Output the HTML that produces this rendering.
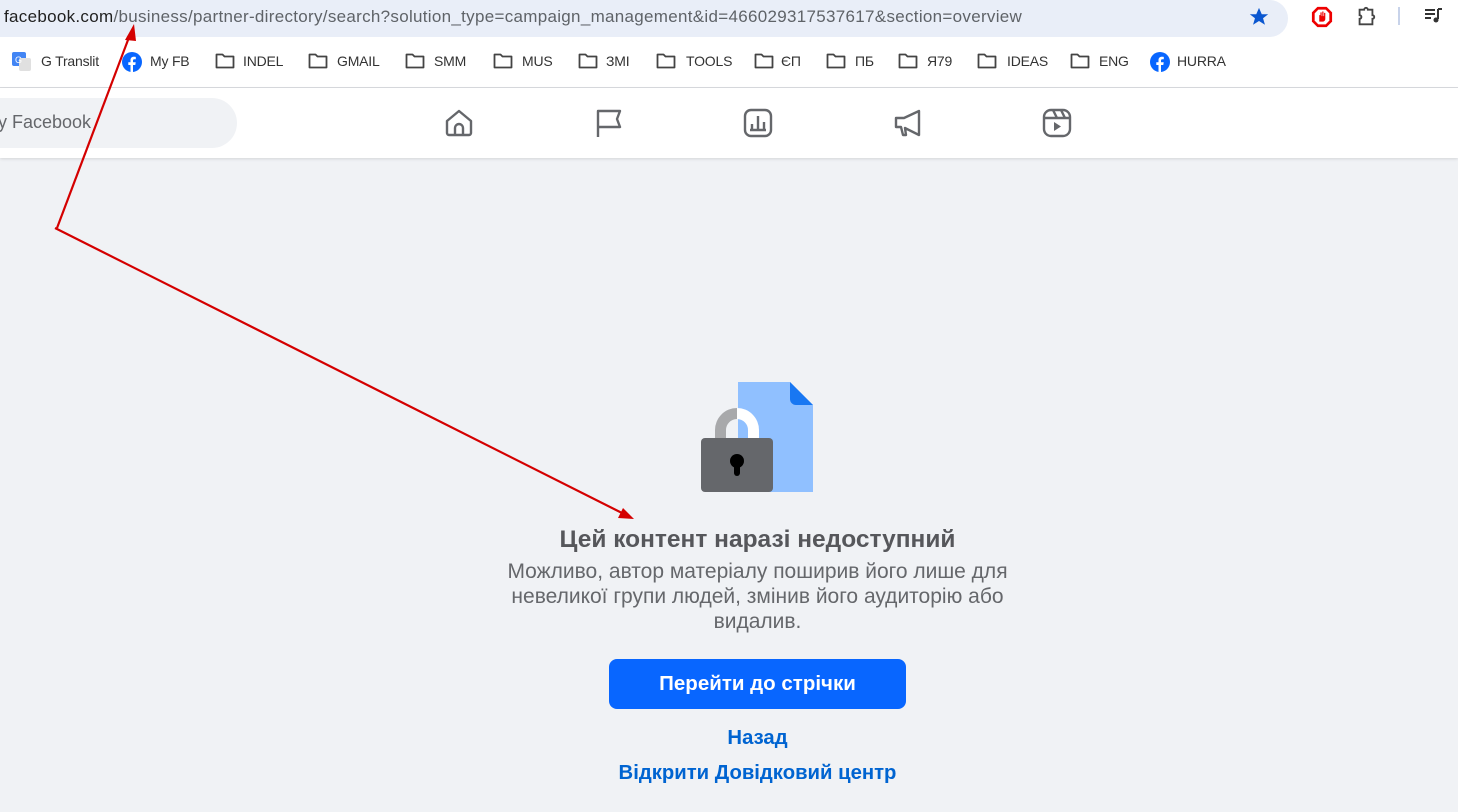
<!DOCTYPE html>
<html><head><meta charset="utf-8"><style>
*{margin:0;padding:0;box-sizing:border-box}
body{width:1458px;height:812px;overflow:hidden;background:#f0f2f5;font-family:"Liberation Sans","DejaVu Sans",sans-serif;position:relative}
.abs{position:absolute}
#top{left:0;top:0;width:1458px;height:88px;background:#fff;border-bottom:1px solid #dadce0}
#url{left:-20px;top:0;width:1308px;height:37px;background:#e9eef8;border-radius:0 19px 19px 0}
#urltext{left:4px;top:7px;font-size:17px;color:#5f6368;white-space:nowrap;letter-spacing:0.3px}
#urltext b{font-weight:normal;color:#1f1f1f}
.bm{position:absolute;top:53px;font-size:14px;color:#333;white-space:nowrap;letter-spacing:-0.2px}
.fold{position:absolute;top:53px;width:20px;height:16px}
#fbbar{left:0;top:88px;width:1458px;height:70px;background:#fff;box-shadow:0 1px 3px rgba(0,0,0,.12)}
#search{left:-40px;top:98px;width:277px;height:50px;background:#f0f2f5;border-radius:25px}
#stext{left:-2px;top:112px;font-size:18px;color:#65676b}
.c{position:absolute;left:0;width:1515px;text-align:center}
</style></head><body>
<div id="top" class="abs"></div>
<div id="url" class="abs"></div>
<div id="urltext" class="abs"><b>facebook.com</b>/business/partner-directory/search?solution_type=campaign_management&amp;id=466029317537617&amp;section=overview</div>
<svg class="abs" style="left:1248px;top:6px" width="22" height="22" viewBox="0 0 24 24"><path d="M12 2l3 7h7l-5.6 4.3 2.1 7.2L12 16.3 5.5 20.5l2.1-7.2L2 9h7z" fill="#0b57d0"/></svg>
<svg class="abs" style="left:1311px;top:6px" width="22" height="22" viewBox="0 0 24 24"><polygon points="7,1 17,1 23,7 23,17 17,23 7,23 1,17 1,7" fill="#e00"/><polygon points="8,4 16,4 20,8 20,16 16,20 8,20 4,16 4,8" fill="#fff"/><path d="M9 17v-7h1.3V7h1.3v4h.7V6h1.3v5h.7V7.5h1.3V14c0 2-1.5 3-3 3z" fill="#e00"/></svg>
<svg class="abs" style="left:1355px;top:6px" width="22" height="22" viewBox="0 0 24 24"><path d="M5 4h5a2 2 0 014 0h5v6a2 2 0 010 4v6H5v-6a2 2 0 000-4z" fill="none" stroke="#444" stroke-width="2"/></svg>
<div class="abs" style="left:1398px;top:7px;width:2px;height:18px;background:#c8d3ea"></div>
<svg class="abs" style="left:1424px;top:7px" width="20" height="18" viewBox="0 0 20 18"><path d="M1 3h10M1 7h10M1 11h6M14 2v10" stroke="#333" stroke-width="2"/><circle cx="12" cy="13" r="2.5" fill="#333"/><path d="M14 2h4" stroke="#333" stroke-width="2"/></svg>

<svg class="abs" style="left:12px;top:52px" width="20" height="20" viewBox="0 0 20 20"><rect x="0" y="0" width="14" height="14" rx="2" fill="#4285f4"/><rect x="7" y="6" width="12" height="13" rx="2" fill="#e0e0e0"/><text x="3" y="11" font-size="9" fill="#fff" font-family="Liberation Sans">G</text></svg>
<div class="bm" style="left:41px">G Translit</div>
<svg class="abs" style="left:122px;top:52px" width="20" height="20" viewBox="0 0 20 20"><circle cx="10" cy="10" r="10" fill="#0866ff"/><path d="M11 20v-7h2.3l.4-2.7H11V8.6c0-.8.3-1.3 1.4-1.3h1.4V4.9c-.3 0-1.1-.1-2-.1-2 0-3.3 1.2-3.3 3.4v2.1H6.3V13h2.2v7z" fill="#fff"/></svg>
<div class="bm" style="left:150px">My FB</div>
<svg class="abs" style="left:1150px;top:52px" width="20" height="20" viewBox="0 0 20 20"><circle cx="10" cy="10" r="10" fill="#0866ff"/><path d="M11 20v-7h2.3l.4-2.7H11V8.6c0-.8.3-1.3 1.4-1.3h1.4V4.9c-.3 0-1.1-.1-2-.1-2 0-3.3 1.2-3.3 3.4v2.1H6.3V13h2.2v7z" fill="#fff"/></svg>
<div class="bm" style="left:1177px">HURRA</div>

<svg class="fold" style="left:215px" viewBox="0 0 20 16"><path d="M1.5 1.5h6l2 2h9v11h-17z" fill="none" stroke="#444" stroke-width="1.8" stroke-linejoin="round"/></svg><div class="bm" style="left:243px">INDEL</div>
<svg class="fold" style="left:308px" viewBox="0 0 20 16"><path d="M1.5 1.5h6l2 2h9v11h-17z" fill="none" stroke="#444" stroke-width="1.8" stroke-linejoin="round"/></svg><div class="bm" style="left:337px">GMAIL</div>
<svg class="fold" style="left:405px" viewBox="0 0 20 16"><path d="M1.5 1.5h6l2 2h9v11h-17z" fill="none" stroke="#444" stroke-width="1.8" stroke-linejoin="round"/></svg><div class="bm" style="left:434px">SMM</div>
<svg class="fold" style="left:493px" viewBox="0 0 20 16"><path d="M1.5 1.5h6l2 2h9v11h-17z" fill="none" stroke="#444" stroke-width="1.8" stroke-linejoin="round"/></svg><div class="bm" style="left:522px">MUS</div>
<svg class="fold" style="left:578px" viewBox="0 0 20 16"><path d="M1.5 1.5h6l2 2h9v11h-17z" fill="none" stroke="#444" stroke-width="1.8" stroke-linejoin="round"/></svg><div class="bm" style="left:606px">ЗМІ</div>
<svg class="fold" style="left:656px" viewBox="0 0 20 16"><path d="M1.5 1.5h6l2 2h9v11h-17z" fill="none" stroke="#444" stroke-width="1.8" stroke-linejoin="round"/></svg><div class="bm" style="left:686px">TOOLS</div>
<svg class="fold" style="left:754px" viewBox="0 0 20 16"><path d="M1.5 1.5h6l2 2h9v11h-17z" fill="none" stroke="#444" stroke-width="1.8" stroke-linejoin="round"/></svg><div class="bm" style="left:781px">ЄП</div>
<svg class="fold" style="left:826px" viewBox="0 0 20 16"><path d="M1.5 1.5h6l2 2h9v11h-17z" fill="none" stroke="#444" stroke-width="1.8" stroke-linejoin="round"/></svg><div class="bm" style="left:855px">ПБ</div>
<svg class="fold" style="left:898px" viewBox="0 0 20 16"><path d="M1.5 1.5h6l2 2h9v11h-17z" fill="none" stroke="#444" stroke-width="1.8" stroke-linejoin="round"/></svg><div class="bm" style="left:927px">Я79</div>
<svg class="fold" style="left:977px" viewBox="0 0 20 16"><path d="M1.5 1.5h6l2 2h9v11h-17z" fill="none" stroke="#444" stroke-width="1.8" stroke-linejoin="round"/></svg><div class="bm" style="left:1007px">IDEAS</div>
<svg class="fold" style="left:1070px" viewBox="0 0 20 16"><path d="M1.5 1.5h6l2 2h9v11h-17z" fill="none" stroke="#444" stroke-width="1.8" stroke-linejoin="round"/></svg><div class="bm" style="left:1099px">ENG</div>

<div id="fbbar" class="abs"></div>
<div id="search" class="abs"></div>
<div id="stext" class="abs">y Facebook</div>
<svg class="abs" style="left:443px;top:107px" width="32" height="32" viewBox="0 0 32 32" fill="none" stroke="#65676b" stroke-width="2.4" stroke-linejoin="round"><path d="M4 14L16 4l12 10v12a2 2 0 01-2 2H6a2 2 0 01-2-2z"/><path d="M12 28v-7a4 4 0 018 0v7"/></svg>
<svg class="abs" style="left:593px;top:107px" width="32" height="32" viewBox="0 0 32 32" fill="none" stroke="#65676b" stroke-width="2.4" stroke-linejoin="round"><path d="M5 30V4h22l-3 8 3 8H5"/></svg>
<svg class="abs" style="left:742px;top:107px" width="32" height="32" viewBox="0 0 32 32" fill="none" stroke="#65676b" stroke-width="2.4"><rect x="3" y="3" width="26" height="26" rx="6"/><path d="M10 23v-6M16 23V9M22 23v-8M8 23h16"/></svg>
<svg class="abs" style="left:891px;top:107px" width="32" height="32" viewBox="0 0 32 32" fill="none" stroke="#65676b" stroke-width="2.4" stroke-linejoin="round"><path d="M28 4L13 11H5v9h5l2 8h3l-1-7 14 7z"/></svg>
<svg class="abs" style="left:1041px;top:107px" width="32" height="32" viewBox="0 0 32 32" fill="none" stroke="#65676b" stroke-width="2.4"><rect x="3" y="3" width="26" height="26" rx="7"/><path d="M3 11h26M12 3l4 8M20 3l4 8"/><path d="M13 15v9l7-4.5z" fill="#65676b" stroke="none"/></svg>

<svg class="abs" style="left:700px;top:380px" width="116" height="115" viewBox="0 0 116 115">
<path d="M38 2h52l23 23v87H38z" fill="#90c0ff"/>
<path d="M90 2l23 23H96a6 6 0 01-6-6z" fill="#1877f2"/>
<path d="M15 60V50a22 22 0 0122-22v11a11 11 0 00-11 11v10z" fill="#a8a9ab"/>
<path d="M37 28a22 22 0 0122 22v10H48V50a11 11 0 00-11-11z" fill="#fff"/>
<rect x="1" y="58" width="72" height="54" rx="4" fill="#65676b"/>
<circle cx="37" cy="81" r="7" fill="#000"/><rect x="34" y="82" width="6" height="14" rx="3" fill="#000"/>
</svg>

<div class="c" style="top:526px;font-size:24.5px;font-weight:bold;color:#56575b">Цей контент наразі недоступний</div>
<div class="c" style="top:559px;font-size:21px;line-height:25px;color:#65676b">Можливо, автор матеріалу поширив його лише для<br>невеликої групи людей, змінив його аудиторію або<br>видалив.</div>
<div class="abs" style="left:609px;top:659px;width:297px;height:50px;background:#0866ff;border-radius:8px;color:#fff;font-weight:bold;font-size:20.5px;text-align:center;line-height:50px">Перейти до стрічки</div>
<div class="c" style="top:727px;font-size:20.3px;font-weight:bold;color:#0064d1">Назад</div>
<div class="c" style="top:762px;font-size:20.3px;font-weight:bold;color:#0064d1">Відкрити Довідковий центр</div>

<svg class="abs" style="left:0;top:0" width="1458" height="812">
<g stroke="#d40000" stroke-width="2.2" fill="#d40000">
<line x1="57" y1="228" x2="131" y2="32"/>
<polygon points="134,24 125,40 136,41" stroke="none"/>
<line x1="55" y1="228" x2="624" y2="514"/>
<polygon points="634,519 618,518 623,508" stroke="none"/>
</g></svg>
</body></html>
